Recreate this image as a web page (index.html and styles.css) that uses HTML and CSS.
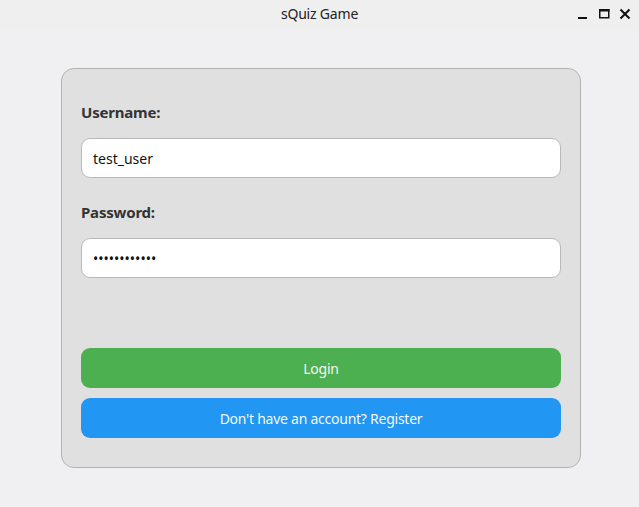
FILE: index.html
```html
<!DOCTYPE html>
<html lang="en">
<head>
<meta charset="utf-8">
<title>sQuiz Game</title>
<link rel="stylesheet" href="styles.css">
</head>
<body>
<div class="titlebar">
  <div class="spacer"></div>
  <div class="title">sQuiz Game</div>
  <div class="controls">
    <svg class="ctl" width="12" height="12" viewBox="0 0 12 12"><rect x="1" y="9" width="9" height="2" fill="#111"/></svg>
    <svg class="ctl" width="12" height="12" viewBox="0 0 12 12"><rect x="1.75" y="1.75" width="9" height="8" fill="none" stroke="#111" stroke-width="1.5"/><rect x="1" y="1" width="10.5" height="2.5" fill="#111"/></svg>
    <svg class="ctl" width="12" height="12" viewBox="0 0 12 12"><path d="M1.5 1.5 L10.5 10.5 M10.5 1.5 L1.5 10.5" stroke="#111" stroke-width="2"/></svg>
  </div>
</div>
<main class="content">
  <form class="card" onsubmit="return false">
    <label class="label" for="user">Username:</label>
    <input class="field" id="user" type="text" value="test_user">
    <label class="label label-pw" for="pw">Password:</label>
    <input class="field" id="pw" type="password" value="testpassword">
    <div class="actions">
      <button class="btn btn-login" type="submit">Login</button>
      <button class="btn btn-register" type="button">Don't have an account? Register</button>
    </div>
  </form>
</main>
</body>
</html>
```
FILE: styles.css
```css
html, body {
  margin: 0;
  padding: 0;
}
body {
  width: 639px;
  height: 507px;
  background: #f0f0f2;
  font-family: "Noto Sans", "Open Sans", "DejaVu Sans", sans-serif;
  overflow: hidden;
}
.titlebar {
  height: 29px;
  background: #efefef;
  display: grid;
  grid-template-columns: 1fr auto 1fr;
  align-items: center;
}
.title {
  font-size: 14px;
  color: #222;
  letter-spacing: -0.2px;
  padding-bottom: 2px;
}
.controls {
  display: flex;
  justify-content: flex-end;
  gap: 9px;
  padding-right: 8px;
  padding-bottom: 2px;
}
.ctl {
  display: block;
}
.content {
  padding: 39px 0 0 61px;
}
.card {
  box-sizing: border-box;
  width: 520px;
  height: 400px;
  background: #e0e0e0;
  border: 1px solid #b3b3b3;
  border-radius: 13px;
  padding: 33px 19px 0 19px;
  display: flex;
  flex-direction: column;
}
.label {
  font-size: 15px;
  line-height: 20px;
  font-weight: 700;
  color: #333;
  letter-spacing: -0.2px;
  margin-bottom: 16px;
}
.label-pw {
  margin-top: 24px;
}
.field {
  box-sizing: border-box;
  width: 480px;
  height: 40px;
  margin: 0;
  padding: 0 11px;
  border: 1px solid #b9b9b9;
  border-radius: 9px;
  background: #fff;
  font-family: inherit;
  font-size: 14px;
  color: #111;
  outline: none;
}
.actions {
  margin-top: 70px;
  display: flex;
  flex-direction: column;
  gap: 10px;
}
.btn {
  box-sizing: border-box;
  width: 480px;
  height: 40px;
  margin: 0;
  border: none;
  border-radius: 9px;
  font-family: inherit;
  font-size: 14px;
  letter-spacing: -0.25px;
  color: #f4f8f4;
  cursor: pointer;
}
.btn-login {
  background: #4caf50;
}
.btn-register {
  background: #2196f3;
}
```
